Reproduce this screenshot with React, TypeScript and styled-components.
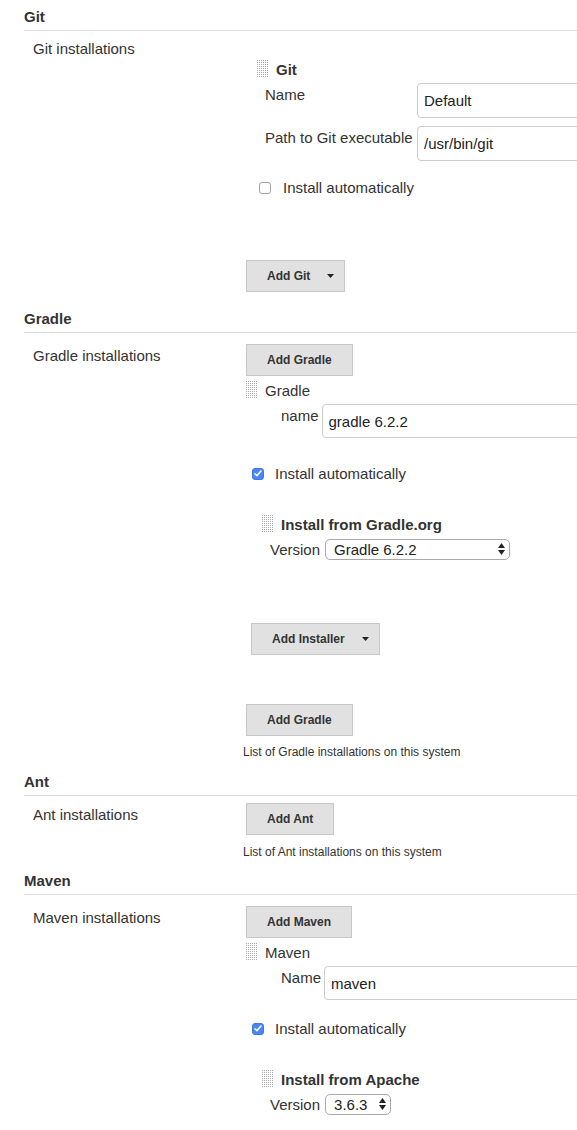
import styled, { createGlobalStyle } from 'styled-components';

const GlobalStyle = createGlobalStyle`
  html, body {
    margin: 0;
    padding: 0;
    background: #fff;
    overflow-x: hidden;
  }
  body {
    font-family: "Liberation Sans", Arial, sans-serif;
    font-size: 15px;
    color: #333;
  }
`;

const Page = styled.div`
  padding: 8px 0 40px 24px;
  overflow: hidden;
`;

const Section = styled.section<{ $mb: number }>`
  margin-bottom: ${p => p.$mb}px;
`;

const SectionTitle = styled.h3`
  margin: 0;
  font-size: 15px;
  font-weight: bold;
  line-height: 17px;
  padding-bottom: 5px;
  border-bottom: 1px solid #dcdcdc;
`;

const SectionBody = styled.div`
  display: grid;
  grid-template-columns: 222px minmax(0, 1fr);
`;

const SectionLabel = styled.div<{ $top: number }>`
  padding: ${p => p.$top}px 0 0 9px;
  line-height: 17px;
`;

const Content = styled.div<{ $top?: number }>`
  display: flex;
  flex-direction: column;
  align-items: flex-start;
  padding-top: ${p => p.$top ?? 0}px;
  min-width: 0;
`;

const Button = styled.button<{ $mt?: number; $ml?: number; $menu?: boolean }>`
  display: inline-flex;
  align-items: center;
  gap: 17px;
  box-sizing: border-box;
  height: 32px;
  padding: 0 ${p => (p.$menu ? 10 : 20)}px 0 20px;
  margin: ${p => p.$mt ?? 0}px 0 0 ${p => p.$ml ?? 0}px;
  background: #e1e1e1;
  border: 1px solid #c8c8c8;
  border-radius: 0;
  font-family: "Liberation Sans", Arial, sans-serif;
  font-size: 12px;
  font-weight: bold;
  color: #333;
  cursor: pointer;
`;

const Caret = () => (
  <svg width="7" height="4" viewBox="0 0 7 4">
    <polygon points="0,0 7,0 3.5,4" fill="#222" />
  </svg>
);

const GripSvg = styled.svg`
  flex-shrink: 0;
  display: block;
`;

const Grip = () => {
  const dots = [];
  for (let y = 0; y < 9; y++) {
    for (let x = 0; x < 6; x++) {
      dots.push(<rect key={`${x}-${y}`} x={x * 2} y={y * 2} width="1" height="1" />);
    }
  }
  return (
    <GripSvg width="11" height="18" viewBox="0 0 11 18" fill="#a8a8a8">
      {dots}
    </GripSvg>
  );
};

const ItemBlock = styled.div<{ $ml?: number; $mt?: number }>`
  display: flex;
  flex-direction: column;
  align-items: flex-start;
  margin: ${p => p.$mt ?? 0}px 0 0 ${p => p.$ml ?? 0}px;
`;

const ItemHeader = styled.div<{ $mt?: number }>`
  display: flex;
  align-items: center;
  gap: 8px;
  height: 18px;
  margin-top: ${p => p.$mt ?? 0}px;
`;

const ItemTitle = styled.span<{ $bold?: boolean }>`
  font-weight: ${p => (p.$bold ? 'bold' : 'normal')};
  line-height: 17px;
`;

const FieldGrid = styled.div`
  display: grid;
  grid-template-columns: 152px auto;
  row-gap: 8px;
  margin: 5px 0 0 8px;
`;

const FieldLabel = styled.label`
  padding-top: 3px;
  line-height: 17px;
  white-space: nowrap;
`;

const InlineField = styled.div`
  display: flex;
  align-items: flex-start;
  gap: 3px;
  margin: 5px 0 0 35px;
`;

const TextInput = styled.input<{ $h: number }>`
  box-sizing: border-box;
  flex-shrink: 0;
  width: 340px;
  height: ${p => p.$h}px;
  margin: 0;
  padding: 0 6px;
  border: 1px solid #cccccc;
  border-radius: 4px;
  background: #fff;
  font-family: "Liberation Sans", Arial, sans-serif;
  font-size: 15px;
  color: #222;
`;

const CheckRow = styled.label<{ $mt: number; $ml: number; $gap: number }>`
  display: flex;
  align-items: center;
  gap: ${p => p.$gap}px;
  margin: ${p => p.$mt}px 0 0 ${p => p.$ml}px;
  line-height: 17px;
`;

const Box = styled.span<{ $checked?: boolean }>`
  display: inline-flex;
  align-items: center;
  justify-content: center;
  box-sizing: border-box;
  width: 12px;
  height: 12px;
  flex-shrink: 0;
  border-radius: 3px;
  border: 1px solid ${p => (p.$checked ? '#3b78e7' : '#a3a3a3')};
  background: ${p => (p.$checked ? '#4a86f4' : '#fff')};
`;

const Checkbox = ({ checked }: { checked?: boolean }) => (
  <Box $checked={checked}>
    {checked && (
      <svg width="8" height="7" viewBox="0 0 8 7">
        <polyline points="1,3.8 3,5.6 7,1" fill="none" stroke="#fff" strokeWidth="1.6" strokeLinecap="round" strokeLinejoin="round" />
      </svg>
    )}
  </Box>
);

const VersionRow = styled.div`
  display: flex;
  align-items: center;
  gap: 5px;
  margin: 6px 0 0 8px;
  line-height: 17px;
`;

const SelectWrap = styled.span<{ $w: number }>`
  position: relative;
  display: inline-block;
  width: ${p => p.$w}px;
  height: 21px;
`;

const Select = styled.select`
  appearance: none;
  box-sizing: border-box;
  width: 100%;
  height: 100%;
  margin: 0;
  padding: 0 18px 0 8px;
  border: 1px solid #a9a9a9;
  border-radius: 5px;
  background: #fff;
  font-family: "Liberation Sans", Arial, sans-serif;
  font-size: 15px;
  color: #222;
`;

const SelectArrows = styled.svg`
  position: absolute;
  right: 5px;
  top: 4px;
  pointer-events: none;
`;

const VersionSelect = ({ width, value }: { width: number; value: string }) => (
  <SelectWrap $w={width}>
    <Select defaultValue={value}>
      <option value={value}>{value}</option>
    </Select>
    <SelectArrows width="7" height="12" viewBox="0 0 7 12">
      <polygon points="0,5 3.5,0 7,5" fill="#222" />
      <polygon points="0,7 7,7 3.5,12" fill="#222" />
    </SelectArrows>
  </SelectWrap>
);

const Desc = styled.div<{ $mt: number }>`
  margin: ${p => p.$mt}px 0 0 -3px;
  font-size: 12px;
  line-height: 14px;
`;

function Installer({ title, width, value }: { title: string; width: number; value: string }) {
  return (
    <ItemBlock $ml={16} $mt={33}>
      <ItemHeader>
        <Grip />
        <ItemTitle $bold>{title}</ItemTitle>
      </ItemHeader>
      <VersionRow>
        <span>Version</span>
        <VersionSelect width={width} value={value} />
      </VersionRow>
    </ItemBlock>
  );
}

export default function App() {
  return (
    <Page>
      <GlobalStyle />

      <Section $mb={18}>
        <SectionTitle>Git</SectionTitle>
        <SectionBody>
          <SectionLabel $top={9}>Git installations</SectionLabel>
          <Content $top={29}>
            <ItemBlock $ml={11}>
              <ItemHeader>
                <Grip />
                <ItemTitle $bold>Git</ItemTitle>
              </ItemHeader>
              <FieldGrid>
                <FieldLabel>Name</FieldLabel>
                <TextInput $h={35} defaultValue="Default" />
                <FieldLabel>Path to Git executable</FieldLabel>
                <TextInput $h={35} defaultValue="/usr/bin/git" />
              </FieldGrid>
              <CheckRow $mt={18} $ml={2} $gap={12}>
                <Checkbox />
                Install automatically
              </CheckRow>
            </ItemBlock>
            <Button $mt={64} $menu>
              Add Git <Caret />
            </Button>
          </Content>
        </SectionBody>
      </Section>

      <Section $mb={14}>
        <SectionTitle>Gradle</SectionTitle>
        <SectionBody>
          <SectionLabel $top={14}>Gradle installations</SectionLabel>
          <Content>
            <Button $mt={11}>Add Gradle</Button>
            <ItemHeader $mt={5}>
              <Grip />
              <ItemTitle>Gradle</ItemTitle>
            </ItemHeader>
            <InlineField>
              <FieldLabel>name</FieldLabel>
              <TextInput $h={34} defaultValue="gradle 6.2.2" />
            </InlineField>
            <CheckRow $mt={27} $ml={6} $gap={11}>
              <Checkbox checked />
              Install automatically
            </CheckRow>
            <Installer title="Install from Gradle.org" width={185} value="Gradle 6.2.2" />
            <Button $mt={63} $ml={5} $menu>
              Add Installer <Caret />
            </Button>
            <Button $mt={49}>Add Gradle</Button>
            <Desc $mt={9}>List of Gradle installations on this system</Desc>
          </Content>
        </SectionBody>
      </Section>

      <Section $mb={13}>
        <SectionTitle>Ant</SectionTitle>
        <SectionBody>
          <SectionLabel $top={10}>Ant installations</SectionLabel>
          <Content>
            <Button $mt={7}>Add Ant</Button>
            <Desc $mt={10}>List of Ant installations on this system</Desc>
          </Content>
        </SectionBody>
      </Section>

      <Section $mb={0}>
        <SectionTitle>Maven</SectionTitle>
        <SectionBody>
          <SectionLabel $top={14}>Maven installations</SectionLabel>
          <Content>
            <Button $mt={11}>Add Maven</Button>
            <ItemHeader $mt={5}>
              <Grip />
              <ItemTitle>Maven</ItemTitle>
            </ItemHeader>
            <InlineField>
              <FieldLabel>Name</FieldLabel>
              <TextInput $h={34} defaultValue="maven" />
            </InlineField>
            <CheckRow $mt={20} $ml={6} $gap={11}>
              <Checkbox checked />
              Install automatically
            </CheckRow>
            <Installer title="Install from Apache" width={66} value="3.6.3" />
          </Content>
        </SectionBody>
      </Section>
    </Page>
  );
}
